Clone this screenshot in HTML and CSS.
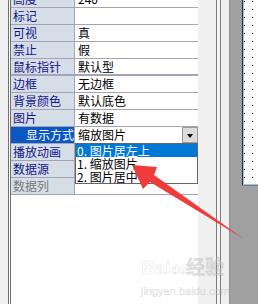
FILE: index.html
```html
<!DOCTYPE html>
<html lang="zh-CN">
<head>
  <meta charset="UTF-8" />
  <title>属性表</title>
  <link rel="stylesheet" href="styles.css">
</head>
<body>

  <div class="window">
    <div class="gutter"></div>

    <div class="pane">
      <div class="props">
        <div class="row"><div class="label">高度</div><div class="value">240</div></div>
        <div class="row"><div class="label">标记</div><div class="value"></div></div>
        <div class="row"><div class="label">可视</div><div class="value">真</div></div>
        <div class="row"><div class="label">禁止</div><div class="value">假</div></div>
        <div class="row group-end"><div class="label">鼠标指针</div><div class="value">默认型</div></div>
        <div class="row"><div class="label">边框</div><div class="value">无边框</div></div>
        <div class="row"><div class="label">背景颜色</div><div class="value">默认底色</div></div>
        <div class="row"><div class="label">图片</div><div class="value">有数据</div></div>
        <div class="row selected">
          <div class="label">显示方式</div>
          <div class="value combo">
            缩放图片
            <span class="drop-btn"></span>
            <ul class="drop-list">
              <li class="active">0. 图片居左上</li>
              <li>1. 缩放图片</li>
              <li>2. 图片居中</li>
            </ul>
          </div>
        </div>
        <div class="row"><div class="label">播放动画</div><div class="value"></div></div>
        <div class="row"><div class="label">数据源</div><div class="value"></div></div>
        <div class="row disabled"><div class="label">数据列</div><div class="value"></div></div>
      </div>
    </div>

    <div class="side">
      <div class="strip"></div>
      <div class="rule"></div>
      <div class="gap"></div>
      <div class="rule"></div>
      <div class="strip narrow"></div>
      <div class="dark-col">
        <svg class="canvas" width="16" height="186">
          <defs>
            <pattern id="dots" width="8" height="8" patternUnits="userSpaceOnUse">
              <rect x="2" y="1" width="1" height="1" fill="#000" />
            </pattern>
          </defs>
          <rect width="16" height="186" fill="#fff" />
          <rect width="16" height="186" fill="url(#dots)" />
          <line x1="0.5" y1="0" x2="0.5" y2="186" stroke="#333" />
          <line x1="1.5" y1="0" x2="1.5" y2="185" stroke="#9cc3e6" />
          <line x1="1" y1="184.5" x2="16" y2="184.5" stroke="#9cc3e6" />
          <line x1="0" y1="185.5" x2="16" y2="185.5" stroke="#7a7a7a" />
        </svg>
      </div>
    </div>
  </div>

  <!-- watermark -->
  <div class="watermark">
    <div class="wm-logo">Bai<span class="paw">du</span>经验</div>
    <div class="wm-url">jingyan.baidu.com</div>
  </div>

  <!-- red arrow pointing at the list -->
  <svg class="arrow" width="258" height="304">
    <polygon points="132,165 157,167 154,175 244,239 150,182 143,189" fill="#f03b3b" />
  </svg>

</body>
</html>
```

FILE: styles.css
```css
body {
  margin: 0;
  width: 258px;
  height: 304px;
  overflow: hidden;
  background: #f0f0f0;
  font-family: "Noto Sans CJK SC", "Liberation Sans", sans-serif;
  font-size: 12px;
  position: relative;
}

.window {
  display: flex;
  height: 304px;
}

.gutter {
  width: 8px;
  background: #f0f0f0;
}

.pane {
  width: 187px;
  border-left: 3px double #707070;
  background: #fff;
}

.props {
  margin-top: -9px;
}

.row {
  display: grid;
  grid-template-columns: 64px 1fr;
  height: 16px;
  border-bottom: 1px solid #a4a4b6;
  line-height: 16px;
}

.row.group-end {
  height: 15px;
  border-bottom-width: 2px;
  line-height: 15px;
}

.label {
  background: #d5dee6;
  border-right: 1px solid #a4a4b6;
  color: #16168a;
  padding-left: 2px;
  white-space: nowrap;
}

.value {
  color: #000;
  padding-left: 3px;
  white-space: nowrap;
}

.row.selected .label {
  background: #0b57c4;
  color: #fff;
  padding-left: 15px;
}

.row.disabled .label {
  color: #7a7a7a;
}

.combo {
  position: relative;
}

.drop-btn {
  position: absolute;
  right: 0;
  top: 0;
  width: 14px;
  height: 14px;
  background: #dcdcdc;
  border: 1px solid #9a9a9a;
}

.drop-btn::after {
  content: "";
  position: absolute;
  left: 4px;
  top: 6px;
  border-left: 3px solid transparent;
  border-right: 3px solid transparent;
  border-top: 4px solid #000;
}

.drop-list {
  position: absolute;
  left: 0;
  right: 0;
  top: 100%;
  margin: 0;
  padding: 0;
  list-style: none;
  background: #fff;
  border: 1px solid #646464;
  z-index: 2;
}

.drop-list li {
  height: 13px;
  line-height: 13px;
  padding-left: 1px;
  color: #000;
}

.drop-list li.active {
  background: #0078d7;
  color: #fff;
}

.side {
  display: flex;
  width: 60px;
}

.strip {
  width: 18px;
  background: #f0f0f0;
}

.strip.narrow {
  width: 9px;
}

.rule {
  width: 1px;
  background: #7c7c7c;
}

.gap {
  width: 3px;
  background: #f4f4f4;
}

.dark-col {
  width: 16px;
  padding-left: 12px;
  background: #a0a0a0;
  border-left: 1px solid #909090;
  margin-left: -1px;
}

.canvas {
  display: block;
}

.watermark {
  position: absolute;
  left: 141px;
  top: 258px;
  color: rgba(255, 255, 255, 0.5);
  -webkit-text-stroke: 0.7px rgba(0, 0, 0, 0.13);
  font-family: "Liberation Sans", sans-serif;
}

.wm-logo {
  font-size: 19px;
  font-weight: bold;
  line-height: 20px;
}

.paw {
  font-size: 13px;
}

.wm-url {
  font-size: 11px;
  line-height: 14px;
  margin-top: 4px;
}

.arrow {
  position: absolute;
  left: 0;
  top: 0;
  z-index: 3;
}
```
